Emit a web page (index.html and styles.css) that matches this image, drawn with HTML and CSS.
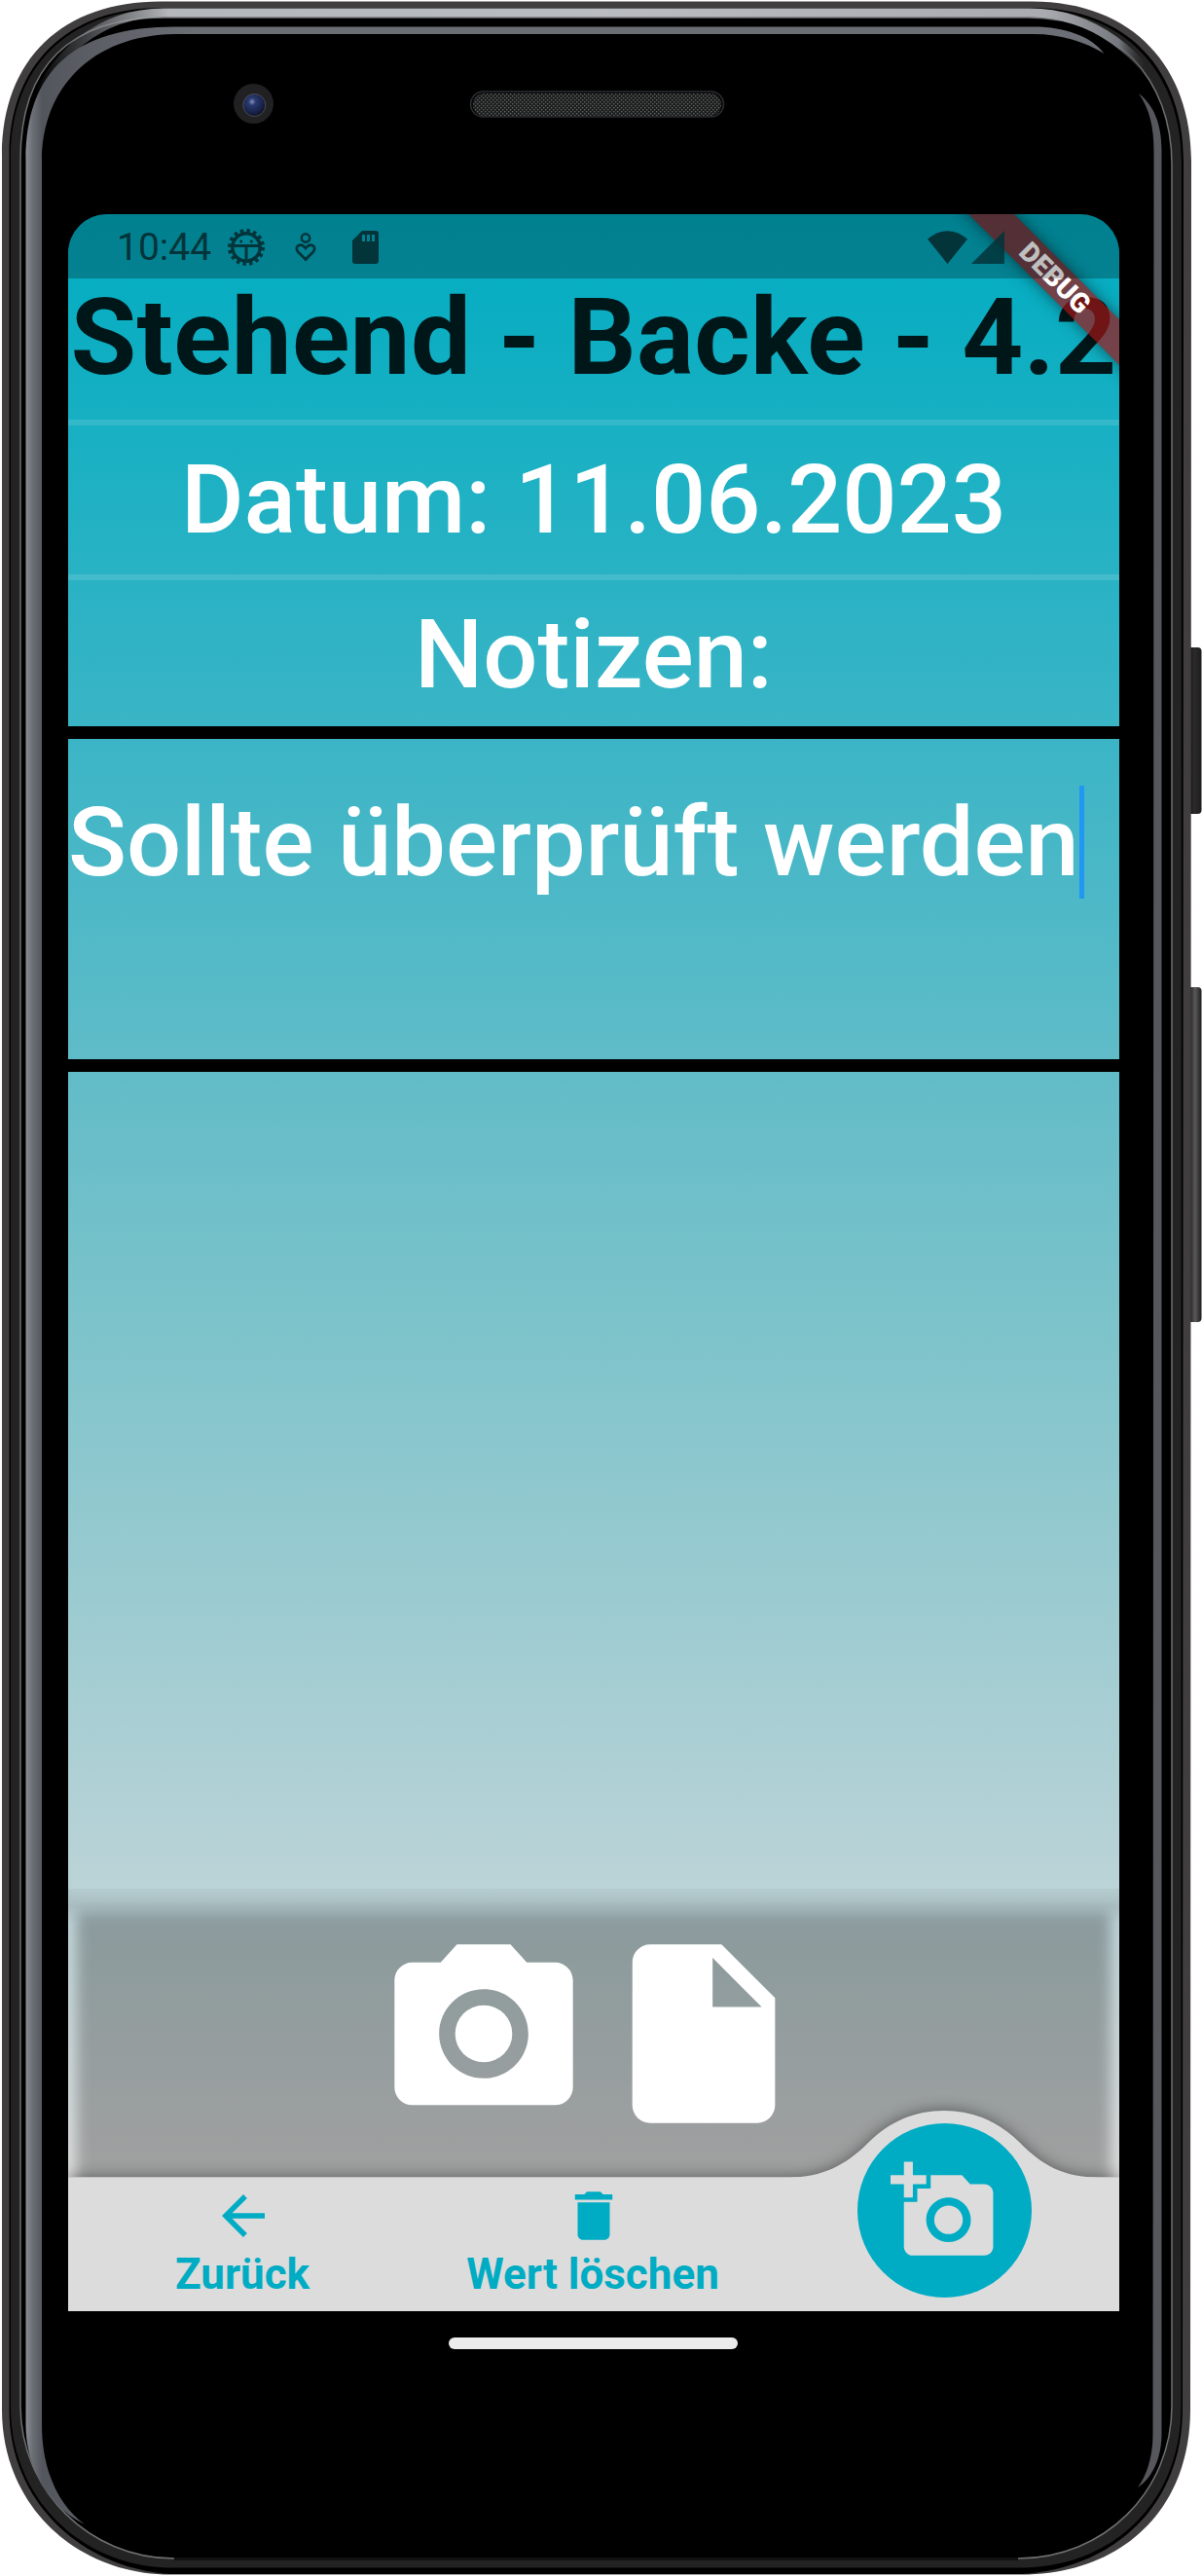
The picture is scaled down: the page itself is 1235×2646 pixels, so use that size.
FILE: index.html
```html
<!DOCTYPE html>
<html lang="de">
<head>
<meta charset="utf-8">
<title>Stehend - Backe</title>
<link rel="stylesheet" href="styles.css">
</head>
<body>
<div class="phone">
  <svg class="shell" viewBox="0 0 1235 2646" aria-hidden="true">
    <defs>
      <linearGradient id="silver" gradientUnits="userSpaceOnUse" x1="35" y1="0" x2="1190" y2="0">
        <stop offset="0" stop-color="#8a8d92" stop-opacity="0"/>
        <stop offset=".035" stop-color="#8a8d92" stop-opacity=".35"/>
        <stop offset=".12" stop-color="#b4b7bb"/>
        <stop offset=".5" stop-color="#b9bcc0"/>
        <stop offset=".9" stop-color="#a9abb0"/>
        <stop offset=".965" stop-color="#75787e"/>
        <stop offset=".99" stop-color="#333" stop-opacity="0"/>
      </linearGradient>
      <linearGradient id="glint" gradientUnits="userSpaceOnUse" x1="26" y1="0" x2="200" y2="0">
        <stop offset="0" stop-color="#8d9096"/>
        <stop offset=".04" stop-color="#6c7077"/>
        <stop offset=".1" stop-color="#53565d"/>
        <stop offset="1" stop-color="#6c6e75"/>
      </linearGradient>
      <linearGradient id="key" x1="0" y1="0" x2="1" y2="0">
        <stop offset="0" stop-color="#111"/>
        <stop offset=".5" stop-color="#2b2b2b"/>
        <stop offset="1" stop-color="#1c1c1c"/>
      </linearGradient>
      <linearGradient id="keyLong" x1="0" y1="0" x2="1" y2="0">
        <stop offset="0" stop-color="#0c0c0c"/>
        <stop offset=".55" stop-color="#5a5a5a"/>
        <stop offset="1" stop-color="#1c1c1c"/>
      </linearGradient>
      <radialGradient id="lens" cx=".4" cy=".35" r=".65">
        <stop offset="0" stop-color="#8391b8"/>
        <stop offset=".25" stop-color="#2a3a70"/>
        <stop offset=".75" stop-color="#18224a"/>
        <stop offset="1" stop-color="#10131f"/>
      </radialGradient>
      <pattern id="mesh" width="4" height="4" patternUnits="userSpaceOnUse">
        <rect width="4" height="4" fill="#1b1c1c"/>
        <rect width="1.4" height="1.4" fill="#606361"/>
        <rect x="2" y="2" width="1.4" height="1.4" fill="#606361"/>
      </pattern>
    </defs>
    <rect x="1220" y="665" width="14.500" height="171" rx="4" fill="url(#key)"/>
    <rect x="1220" y="1014" width="14.500" height="344" rx="4" fill="url(#keyLong)"/>
    <path d="M2 160C2 60 65 1.500 165 1.500H1060C1165 1.500 1224 70 1224 165L1223 2475C1223 2580 1150 2644.500 1050 2644.500H175C80 2644.500 2 2575 2 2475Z" fill="#403e3e"/>
    <path d="M9.500 160C9.500 66 70 8 165 8H1060C1158 8 1216 72 1216 165L1215 2475C1215 2572 1146 2638 1050 2644H175C84 2638 9.500 2570 9.500 2475Z" fill="#000"/>
    <path d="M11 162C11 68 71 9.500 167 9.500H1058C1155 9.500 1214 74 1214 167L1213.500 2473C1213.500 2570 1143 2637.500 1048 2637.500H177C86 2637.500 11 2568 11 2473Z" fill="#232323"/>
    <path d="M21 164C21 68 72 18 169 18H1056C1146 18 1204 80 1204 169V2471C1204 2560 1134 2628 1046 2628H179C92 2628 21 2558 21 2471Z" fill="#000" stroke="#6f6f71" stroke-width="1.500"/>
    <path d="M179 2628.500H1046" stroke="#111" stroke-width="3"/>
    <path d="M32 120C50 55 105 13 168 13H1058C1120 13 1180 55 1198 112" fill="none" stroke="url(#silver)" stroke-width="9"/>
    <path d="M26.500 165C26.500 72 77 27.500 180 27.500H1062C1095 27.500 1122 38 1134.500 55C1115 43 1090 35 1062 35H180C93 36 43 92 43 165V2490C43 2538 60 2573 87 2593C50 2575 26.500 2535 26.500 2490Z" fill="url(#glint)"/>
    <path d="M1170 96C1185 108 1193.500 126 1193.500 155V2500C1193.500 2525 1184 2545 1169 2555C1180 2540 1184.500 2520 1184.500 2500L1185.500 155C1185.500 130 1181 112 1170 96Z" fill="#56575d"/>
    <circle cx="260.500" cy="106.500" r="20.500" fill="#212123"/>
    <circle cx="261.300" cy="108" r="11.500" fill="url(#lens)" stroke="#4b4d52" stroke-width="1"/>
    <rect x="483.500" y="94" width="260" height="26" rx="13" fill="#08080a" stroke="#2b2b31" stroke-width="1.500"/>
    <rect x="486" y="96" width="255" height="23" rx="11.500" fill="url(#mesh)"/>
  </svg>

  <div class="display">
    <main class="screen">
      <section class="info">
        <h1 class="title">Stehend - Backe - 4.2</h1>
        <p class="line date">Datum: 11.06.2023</p>
        <p class="line notes-label">Notizen:</p>
      </section>
      <section class="notes"><span class="notes-text">Sollte überprüft werden</span><span class="cursor"></span></section>
      <section class="blank"></section>
      <section class="media">
        <svg class="media-icon" viewBox="0 0 24 24"><circle cx="12" cy="12" r="3.200"/><path d="M9 2L7.170 4H4c-1.100 0-2 .9-2 2v12c0 1.100.9 2 2 2h16c1.100 0 2-.9 2-2V6c0-1.100-.9-2-2-2h-3.170L15 2H9zm3 15c-2.760 0-5-2.240-5-5s2.240-5 5-5 5 2.240 5 5-2.240 5-5 5z"/></svg>
        <svg class="media-icon" viewBox="0 0 24 24"><path d="M6 2c-1.100 0-1.990.9-1.990 2L4 20c0 1.100.89 2 1.990 2H18c1.100 0 2-.9 2-2V8l-6-6H6zm7 7V3.500L18.500 9H13z"/></svg>
      </section>
      <nav class="nav">
        <svg class="nav-shape" viewBox="0 0 1080 206"><path d="M0 68.500H740C775 68.500 799 56 822 33C844 11 870 0 900 0S956 11 978 33C1001 56 1022 68.500 1060 68.500H1080V206H0Z"/></svg>
        <a class="nav-item"><svg class="nav-icon" viewBox="0 0 24 24"><path d="M20 11H7.830l5.590-5.590L12 4l-8 8 8 8 1.410-1.410L7.830 13H20v-2z"/></svg><span class="nav-label">Zurück</span></a>
        <a class="nav-item"><svg class="nav-icon" viewBox="0 0 24 24"><path d="M6 19c0 1.100.9 2 2 2h8c1.100 0 2-.9 2-2V7H6v12zM19 4h-3.500l-1-1h-5l-1 1H5v2h14V4z"/></svg><span class="nav-label">Wert löschen</span></a>
        <a class="fab"><svg viewBox="0 0 24 24"><path d="M3 4V1h2v3h3v2H5v3H3V6H0V4h3zm3 6V7h3V4h7l1.830 2H21c1.100 0 2 .9 2 2v12c0 1.100-.9 2-2 2H5c-1.100 0-2-.9-2-2V10h3zm7 9c2.760 0 5-2.240 5-5s-2.240-5-5-5-5 2.240-5 5 2.240 5 5 5zm-3.200-5c0 1.770 1.430 3.200 3.200 3.200s3.200-1.430 3.200-3.200-1.430-3.200-3.200-3.200-3.200 1.430-3.200 3.200z"/></svg></a>
      </nav>
      <div class="debug">DEBUG</div>
      <header class="status">
        <span class="clock">10:44</span>
        <svg class="gear" viewBox="-20 -20 40 40"><circle r="14.200" fill="none" stroke="currentColor" stroke-width="3.400"/><circle r="17" fill="none" stroke="currentColor" stroke-width="4" stroke-dasharray="3.400 3.276"/><path d="M-14-1.500H14M0-1.500V14" fill="none" stroke="currentColor" stroke-width="3"/><circle cx="-5.300" cy="-6" r="1.500"/><circle cx="5.300" cy="-6" r="1.500"/></svg>
        <svg class="heart" viewBox="0 0 22 30"><circle cx="11" cy="5.500" r="4.200" fill="none" stroke="currentColor" stroke-width="2.500"/><path d="M11 27.500L3 19.500C-1 14 6 9.500 11 16C16 9.500 23 14 19 19.500Z" fill="none" stroke="currentColor" stroke-width="2.700"/></svg>
        <svg class="sd" viewBox="0 0 27 34"><path fill-rule="evenodd" d="M10 0H24Q27 0 27 3V31Q27 34 24 34H3Q0 34 0 31V10ZM10 4V11H13V4ZM15 4V11H18V4ZM20 4V11H23V4Z"/></svg>
        <svg class="wifi" viewBox="0 0 41 34"><path d="M0 8.500Q20.500-8 41 8.500L20.500 34Z"/></svg>
        <svg class="signal" viewBox="0 0 34 34"><path d="M34 0V34H0Z"/></svg>
      </header>
    </main>
    <div class="home-bar"></div>
  </div>
</div>
</body>
</html>
```
FILE: styles.css
```css
* { box-sizing: border-box; }

body {
  margin: 0;
  background: #fff;
  font-family: Roboto, sans-serif;
}

.phone {
  display: grid;
  width: 1235px;
  height: 2646px;
  overflow: hidden;
}

.shell, .display { grid-area: 1 / 1; }
.shell { width: 1235px; height: 2646px; }

.display {
  display: flex;
  flex-direction: column;
  width: 1080px;
  margin: 220px 0 0 70px;
}

.screen {
  position: relative;
  display: flex;
  flex-direction: column;
  height: 2154px;
  overflow: hidden;
  border-radius: 40px 40px 0 0;
  background: linear-gradient(#00acc1 0, #3bb5c6 540px, #62bcc8 890px, #80c4cb 1170px, #bad3d7 1710px, #dcdcdc 2016px);
}

.info { height: 526px; }

.title, .line { margin: 0; text-align: center; white-space: nowrap; }

.title {
  height: 211px;
  padding-top: 62px;
  font-size: 110px;
  line-height: 129px;
  font-weight: 700;
  letter-spacing: .41px;
  color: #00171a;
}

.line {
  font-size: 99px;
  line-height: 116px;
  font-weight: 500;
  color: #fff;
  border-top: 6px solid rgba(255, 255, 255, .12);
}

.date { height: 159px; padding-top: 18px; }
.notes-label { height: 156px; padding-top: 18px; }

.notes {
  display: flex;
  align-items: flex-start;
  height: 354.500px;
  padding-top: 48px;
  border: solid #000;
  border-width: 13.500px 0;
  font-size: 99px;
  line-height: 116px;
  font-weight: 500;
  color: #fff;
  white-space: nowrap;
}

.cursor { width: 5.500px; height: 115.500px; background: #2196f3; }

.blank { flex: 1; }

.media {
  position: relative;
  display: flex;
  justify-content: center;
  gap: 6px;
  height: 296px;
  padding-top: 38.500px;
  overflow: hidden;
  background: linear-gradient(rgba(0, 0, 0, .04), rgba(0, 0, 0, .1) 18px, transparent 36px);
}

.media::before {
  content: "";
  position: absolute;
  inset: 25px 9px -40px;
  background: rgba(0, 0, 0, .27);
  filter: blur(7px);
}

.media-icon { position: relative; width: 220px; height: 220px; fill: #fff; }

.nav {
  position: relative;
  display: flex;
  height: 138px;
  color: #00acc4;
}

.nav-shape {
  position: absolute;
  left: 0;
  bottom: 0;
  width: 1080px;
  height: 206px;
  fill: #dcdcdc;
  overflow: visible;
  filter: drop-shadow(0 0 8px rgba(0, 0, 0, .45));
}

.nav-item {
  position: relative;
  display: flex;
  flex-direction: column;
  align-items: center;
  width: 360px;
  padding-top: 6.500px;
  font-size: 44px;
  line-height: 52px;
  font-weight: 700;
}

.nav-icon { width: 66px; height: 66px; fill: currentColor; }
.nav-label { margin: 1px 2px 0 0; }

.fab {
  position: absolute;
  left: 810.500px;
  top: -55px;
  display: flex;
  align-items: center;
  justify-content: center;
  width: 179px;
  height: 179px;
  border-radius: 50%;
  background: #00acc4;
}

.fab svg { width: 110px; height: 110px; fill: #dcdcdc; }

.debug {
  position: absolute;
  left: 864px;
  top: 49px;
  width: 300px;
  height: 33px;
  line-height: 33px;
  text-align: center;
  font-size: 28px;
  font-weight: 900;
  color: #fff;
  background: rgba(160, 20, 20, .7);
  box-shadow: 0 0 16px rgba(0, 0, 0, .5);
  transform: rotate(45deg);
}

.status {
  position: absolute;
  inset: 0 0 auto;
  display: flex;
  align-items: center;
  height: 66px;
  padding: 2px 118px 0 50px;
  background: rgba(0, 0, 0, .25);
  color: #02343a;
}

.status svg { fill: currentColor; }
.clock { width: 113px; font-size: 39px; line-height: 46px; }
.gear { width: 40px; height: 40px; }
.heart { width: 22px; height: 30px; margin-left: 30px; }
.sd { width: 27px; height: 34px; margin-left: 37px; }
.wifi { width: 41px; height: 34px; margin-left: auto; }
.signal { width: 34px; height: 34px; margin-left: 4px; opacity: .85; }

.home-bar {
  width: 297px;
  height: 11.500px;
  margin: 27px 0 0 391px;
  border-radius: 6px;
  background: #ececec;
}
```
